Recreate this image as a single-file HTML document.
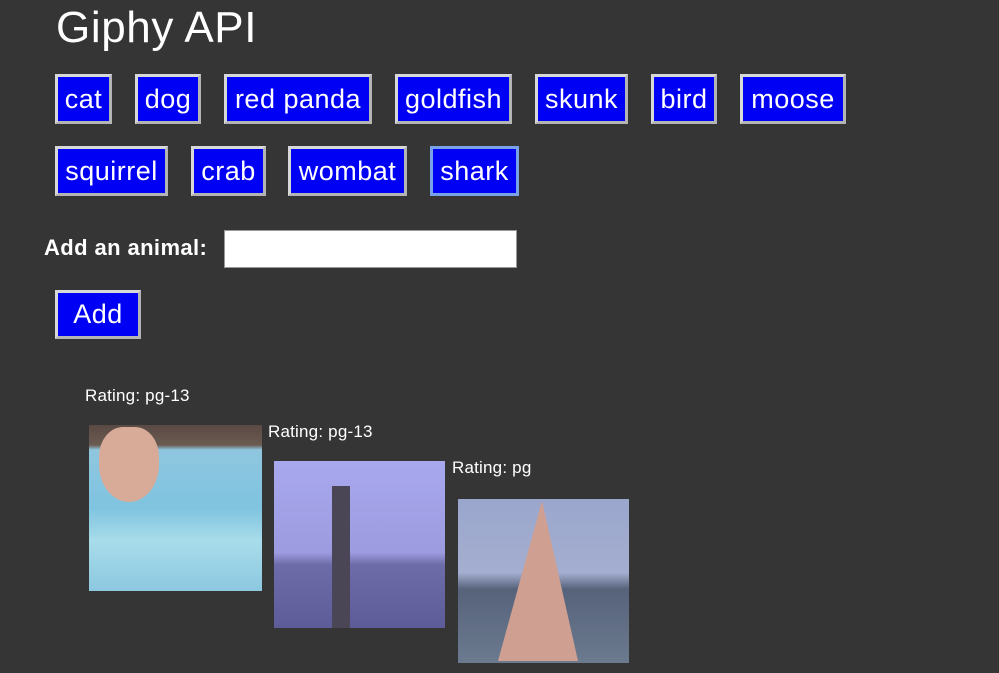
<!DOCTYPE html>
<html><head><style>
body{margin:0;width:999px;height:673px;overflow:hidden;background:#353535;font-family:"Liberation Sans",Arial,sans-serif;position:relative;color:#fff}
.a{position:absolute}
.b{position:absolute;box-sizing:border-box;background:#0000f5;color:#fff;border:3px solid #b4b4b4;border-top-color:#d8d8d8;border-left-color:#d8d8d8;font-size:27px;letter-spacing:0.5px;display:flex;align-items:center;justify-content:center;height:50px;white-space:nowrap}
.r{position:absolute;font-size:17px;letter-spacing:0.2px}
</style></head><body>
<div class="a" style="left:56px;top:3px;font-size:44px;letter-spacing:0.6px">Giphy API</div>
<div class="b" style="left:55px;top:74px;width:57px">cat</div>
<div class="b" style="left:135px;top:74px;width:66px">dog</div>
<div class="b" style="left:224px;top:74px;width:148px">red panda</div>
<div class="b" style="left:395px;top:74px;width:117px">goldfish</div>
<div class="b" style="left:535px;top:74px;width:93px">skunk</div>
<div class="b" style="left:651px;top:74px;width:66px">bird</div>
<div class="b" style="left:740px;top:74px;width:106px">moose</div>
<div class="b" style="left:55px;top:146px;width:113px">squirrel</div>
<div class="b" style="left:191px;top:146px;width:75px">crab</div>
<div class="b" style="left:288px;top:146px;width:119px">wombat</div>
<div class="b" style="left:430px;top:146px;width:89px;border-color:#7aa2e8">shark</div>
<div class="a" style="left:44px;top:235px;font-size:22px;font-weight:bold;letter-spacing:0.4px">Add an animal:</div>
<div class="a" style="left:224px;top:230px;width:293px;height:38px;background:#fff;box-sizing:border-box;border:1px solid #999"></div>
<div class="b" style="left:55px;top:290px;width:86px;height:49px">Add</div>
<div class="r" style="left:85px;top:386px">Rating: pg-13</div>
<div class="a" style="left:89px;top:425px;width:173px;height:166px;background:linear-gradient(180deg,#5a4a44 0,#6b5a50 12%,#8fc6df 15%,#7fc4e0 50%,#a8dcea 70%,#8cc8e0 100%)"><div class="a" style="left:10px;top:2px;width:60px;height:75px;border-radius:40% 40% 50% 50%;background:#d8aa98"></div></div>
<div class="r" style="left:268px;top:422px">Rating: pg-13</div>
<div class="a" style="left:274px;top:461px;width:171px;height:167px;background:linear-gradient(180deg,#a8a8ee 0,#9d9be0 55%,#6e6ca8 62%,#5e5c98 100%)"><div class="a" style="left:58px;top:25px;width:18px;height:142px;background:#4a4656"></div></div>
<div class="r" style="left:452px;top:458px">Rating: pg</div>
<div class="a" style="left:458px;top:499px;width:171px;height:164px;background:linear-gradient(180deg,#9aa6cc 0,#a4aed0 45%,#56637a 55%,#6c7a90 100%)"><div class="a" style="left:40px;top:2px;width:80px;height:160px;background:#cfa092;clip-path:polygon(55% 0,100% 100%,0 100%)"></div></div>
</body></html>
